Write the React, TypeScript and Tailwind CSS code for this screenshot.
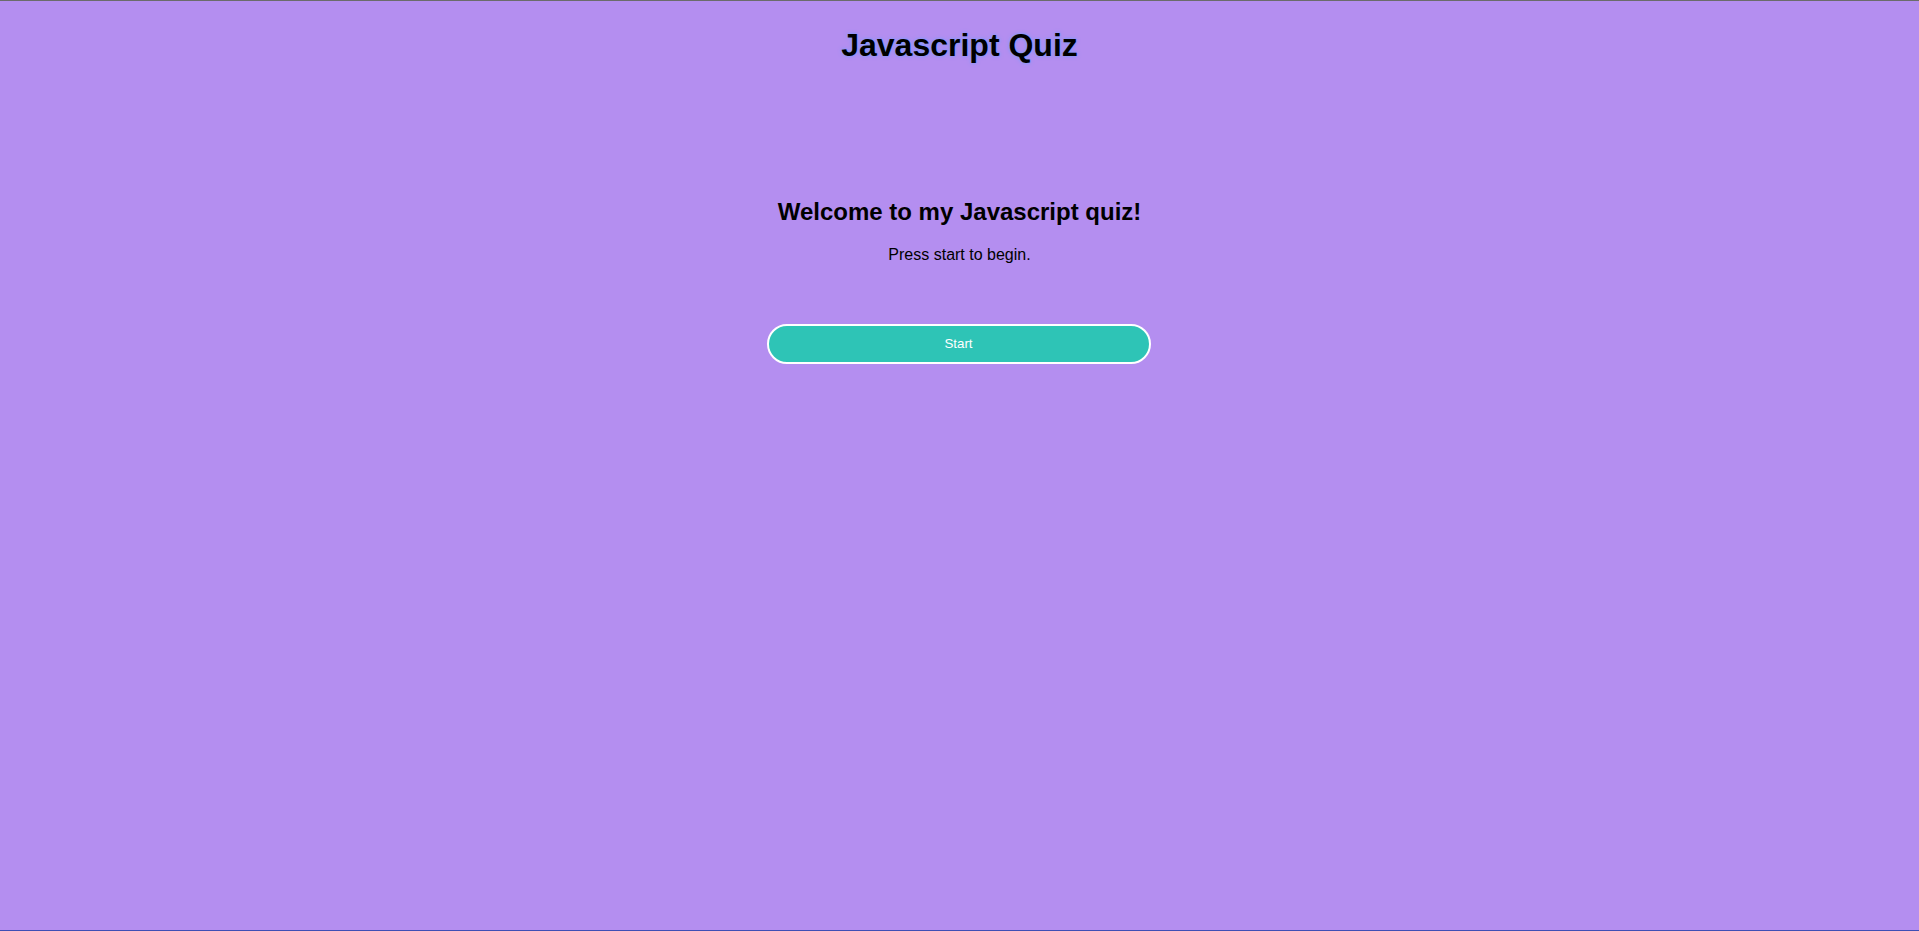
import React from "react";

const App: React.FC = () => {
  const handleStart = () => {};

  return (
    <div className="h-screen w-full bg-[#b48ef0] border-t border-b border-t-[#6b6b6b] border-b-[#3f4fb5] font-['Liberation_Sans',Arial,sans-serif] text-black">
      <header className="flex justify-center">
        <h1 className="mt-[26px] text-[32px] leading-[37px] font-bold [text-shadow:0_0_4px_#7d9bff,0_0_2px_#7d9bff]">
          Javascript Quiz
        </h1>
      </header>

      <main className="flex flex-col items-center mt-[134px]">
        <h2 className="text-[24px] leading-[28px] font-bold">
          Welcome to my Javascript quiz!
        </h2>
        <p className="mt-[20px] text-[16px] leading-[18px]">
          Press start to begin.
        </p>
        <button
          onClick={handleStart}
          className="mt-[60px] w-[384px] h-[40px] -ml-[2px] rounded-full border-2 border-white bg-[#2ec4b6] text-white text-[13.33px]"
        >
          Start
        </button>
      </main>
    </div>
  );
};

export default App;
